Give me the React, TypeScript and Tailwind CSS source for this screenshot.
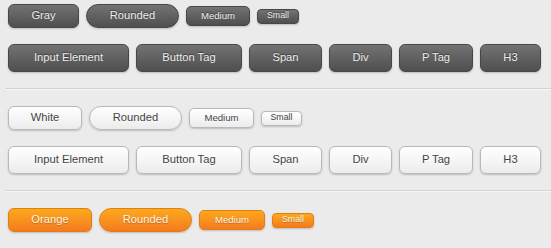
import React from 'react';

type Variant = 'gray' | 'white' | 'orange';
type Size = 'big' | 'rounded' | 'medium' | 'small' | 'tag';

const variantClass: Record<Variant, string> = {
  gray: 'bg-gradient-to-b from-[#737373] to-[#4f4f4f] border-[#474747] text-[#eeeeee] [text-shadow:0_-1px_1px_rgba(0,0,0,0.45)]',
  white: 'bg-gradient-to-b from-white to-[#ececec] border-[#b9b9b9] text-[#444444] [text-shadow:0_1px_1px_rgba(255,255,255,0.8)]',
  orange: 'bg-gradient-to-b from-[#fba91c] to-[#f47a20] border-[#e07f10] text-[#fef4e9] [text-shadow:0_1px_1px_rgba(0,0,0,0.25)]',
};

const sizeClass: Record<Size, string> = {
  big: 'h-[24px] text-[11.2px] rounded-[6px]',
  rounded: 'h-[24px] text-[11.2px] rounded-full',
  medium: 'h-[20px] text-[9.6px] rounded-[5px]',
  small: 'h-[15px] text-[8.8px] rounded-[4px]',
  tag: 'h-[28px] text-[11.2px] rounded-[6px]',
};

function Btn({ label, variant, size, w }: { label: string; variant: Variant; size: Size; w: number }) {
  return (
    <div
      className={`flex items-center justify-center border leading-none pb-px shadow-[0_1px_2px_rgba(0,0,0,0.2)] ${variantClass[variant]} ${sizeClass[size]}`}
      style={{ width: w }}
    >
      {label}
    </div>
  );
}

const sections: { variant: Variant; name: string; widths: number[]; tags: boolean }[] = [
  { variant: 'gray', name: 'Gray', widths: [71, 93, 64, 42], tags: true },
  { variant: 'white', name: 'White', widths: [74, 93, 65, 41], tags: true },
  { variant: 'orange', name: 'Orange', widths: [84, 93, 66, 42], tags: false },
];

const tagButtons: [string, number][] = [
  ['Input Element', 121],
  ['Button Tag', 106],
  ['Span', 73],
  ['Div', 63],
  ['P Tag', 74],
  ['H3', 61],
];

export default function App() {
  return (
    <div className="w-[551px] h-[248px] overflow-hidden bg-[#ebebeb] pt-[4px] font-['Liberation_Sans',Arial,sans-serif]">
      {sections.map((s, i) => (
        <div key={s.variant}>
          {i > 0 && <div className="ml-[6px] h-px bg-[#d2d2d2] border-b border-[#f7f7f7] box-content mb-[16px]" />}
          <div className="flex flex-col gap-[16px] pl-[8px]">
            <div className="flex items-center gap-[7px]">
              <Btn label={s.name} variant={s.variant} size="big" w={s.widths[0]} />
              <Btn label="Rounded" variant={s.variant} size="rounded" w={s.widths[1]} />
              <Btn label="Medium" variant={s.variant} size="medium" w={s.widths[2]} />
              <Btn label="Small" variant={s.variant} size="small" w={s.widths[3]} />
            </div>
            {s.tags && (
              <div className="flex items-center gap-[7px] mb-[16px]">
                {tagButtons.map(([label, w]) => (
                  <Btn key={label} label={label} variant={s.variant} size="tag" w={w} />
                ))}
              </div>
            )}
          </div>
        </div>
      ))}
    </div>
  );
}
